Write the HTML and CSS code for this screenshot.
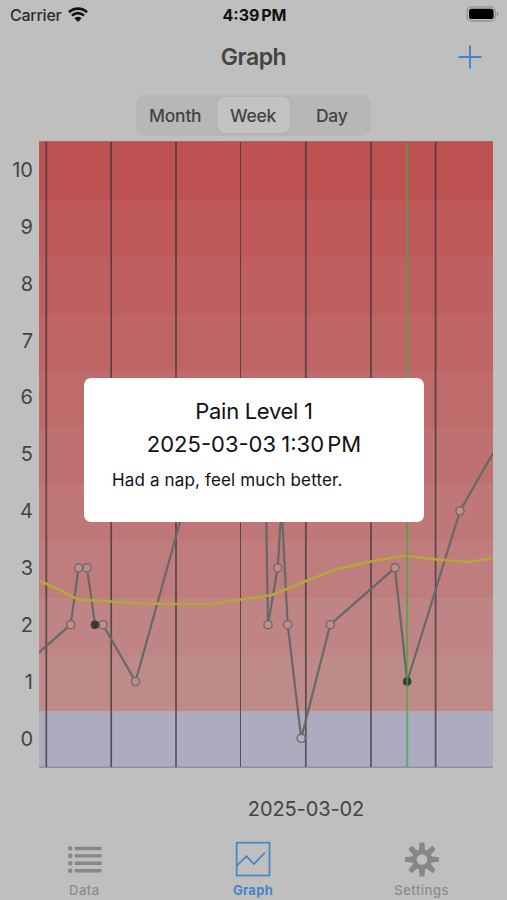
FILE: index.html
```
<!DOCTYPE html>
<html lang="en">
<head>
    <meta charset="UTF-8">
    <meta name="viewport" content="width=device-width, initial-scale=1.0">
    <title>Graph</title>
    <link rel="stylesheet" href="styles.css">
</head>
<body>
    <div class="status-bar">
        <div class="carrier">
            <span>Carrier</span>
            <svg width="20" height="16" viewBox="0 0 20 16">
                <path d="M1 5.3a12.9 12.9 0 0 1 18 0M4 8.6a8.6 8.6 0 0 1 12 0" fill="none" stroke="#111" stroke-width="2.7"/>
                <path d="M6.4 11.2a5.2 5.2 0 0 1 7.2 0L10 15z" fill="#111"/>
            </svg>
        </div>
        <div class="time">4:39 <span>PM</span></div>
        <div class="battery">
            <svg width="33" height="16" viewBox="0 0 33 16">
                <rect x="1" y="0.8" width="28.4" height="14.2" rx="4.6" fill="none" stroke="#929292" stroke-width="1.3"/>
                <rect x="3" y="2.8" width="24.6" height="10.2" rx="2.6" fill="#000"/>
                <path d="M31 5.6q2.4 2.4 0 4.8z" fill="#888"/>
            </svg>
        </div>
    </div>

    <div class="nav-bar">
        <h1>Graph</h1>
        <svg class="add" width="24" height="24" viewBox="0 0 24 24">
            <path d="M12 0.5v23M0.5 12h23" stroke="#4585c8" stroke-width="2"/>
        </svg>
    </div>

    <div class="segmented">
        <span>Month</span>
        <span class="selected">Week</span>
        <span>Day</span>
    </div>

    <div class="chart">
        <div class="y-axis">
            <span>10</span>
            <span>9</span>
            <span>8</span>
            <span>7</span>
            <span>6</span>
            <span>5</span>
            <span>4</span>
            <span>3</span>
            <span>2</span>
            <span>1</span>
            <span>0</span>
        </div>
        <svg class="plot" width="454" height="627" viewBox="39 141 454 627">
            <!-- Pain level bands -->
            <rect x="39" y="141" width="454" height="59" fill="#be5151"/>
            <rect x="39" y="200" width="454" height="57" fill="#bf5858"/>
            <rect x="39" y="257" width="454" height="57" fill="#bf5f5f"/>
            <rect x="39" y="314" width="454" height="57" fill="#bf6565"/>
            <rect x="39" y="371" width="454" height="56" fill="#bf6b6b"/>
            <rect x="39" y="427" width="454" height="57" fill="#bf7171"/>
            <rect x="39" y="484" width="454" height="57" fill="#bf7777"/>
            <rect x="39" y="541" width="454" height="57" fill="#bf7d7d"/>
            <rect x="39" y="598" width="454" height="57" fill="#bf8484"/>
            <rect x="39" y="655" width="454" height="56" fill="#bf8b89"/>
            <rect x="39" y="711" width="454" height="57" fill="#adabbf"/>
            <path d="M39 141.4H493" stroke="#a86a6a" stroke-width="1"/>
            <path d="M39 767.2H493" stroke="#929098" stroke-width="1.5"/>

            <!-- Days -->
            <path d="M46.3 142V767M111.2 142V767M176 142V767M305.8 142V767M371 142V767M435.6 142V767" stroke="#383438" stroke-opacity="0.75" stroke-width="1.7"/>
            <path d="M240.5 142V767" stroke="#383438" stroke-opacity="0.75" stroke-width="1"/>

            <polyline class="levels" points="39,652.5 70.7,624.7 78.6,567.8 87,567.8 95,624.7 103,624.7 135.5,681.5 182,515"/>
            <polyline class="levels" points="266,505 268,624.7 277.7,567.8 281.5,505 287.7,624.7 301.2,738.3 330.2,624.7 395,567.8 407.2,681.5 460,511 493,453"/>

            <g class="dots">
                <circle cx="70.7" cy="624.7" r="4.1"/>
                <circle cx="78.6" cy="567.8" r="4.1"/>
                <circle cx="87" cy="567.8" r="4.1"/>
                <circle cx="103" cy="624.7" r="4.1"/>
                <circle cx="135.5" cy="681.5" r="4.1"/>
                <circle cx="268" cy="624.7" r="4.1"/>
                <circle cx="277.7" cy="567.8" r="4.1"/>
                <circle cx="287.7" cy="624.7" r="4.1"/>
                <circle class="zero" cx="301.2" cy="738.3" r="4.1"/>
                <circle cx="330.2" cy="624.7" r="4.1"/>
                <circle cx="395" cy="567.8" r="4.1"/>
                <circle cx="460" cy="511" r="4.1"/>
                <circle class="noted" cx="95" cy="624.7" r="4"/>
                <circle class="noted" cx="407.2" cy="681.5" r="4"/>
            </g>

            <polyline class="average" points="39,580.5 59,589.5 78,599.5 111,601.5 140,603.5 176,604 210,604.2 240,599.5 272,595 305,581.5 335,569.5 371,561.5 404,555.5 436,559.5 468,562 493,558"/>
            <path d="M407.2 142V767" stroke="#3faa44" stroke-opacity="0.7" stroke-width="2"/>
        </svg>

        <div class="popup">
            <p class="level">Pain Level 1</p>
            <p class="when">2025-03-03 1:30 <span>PM</span></p>
            <p class="note">Had a nap, feel much better.</p>
        </div>
    </div>

    <div class="x-axis">2025-03-02</div>

    <div class="tab-bar">
        <div class="tab">
            <svg width="36" height="36" viewBox="0 0 36 36">
                <path d="M8.8 7.5H35.6M8.8 14.9H35.6M8.8 22.3H35.6M8.8 29.7H35.6" stroke="#878787" stroke-width="3.4"/>
                <g fill="#878787">
                    <circle cx="4.2" cy="7.5" r="2.3"/>
                    <circle cx="4.2" cy="14.9" r="2.3"/>
                    <circle cx="4.2" cy="22.3" r="2.3"/>
                    <circle cx="4.2" cy="29.7" r="2.3"/>
                </g>
            </svg>
            <span>Data</span>
        </div>
        <div class="tab active">
            <svg width="36" height="36" viewBox="0 0 36 36">
                <rect x="1.7" y="1.7" width="32.8" height="32.8" fill="none" stroke="#4585c8" stroke-width="1.7"/>
                <path d="M2 24.5L11.4 15.3L19 23L30 11.5" fill="none" stroke="#4585c8" stroke-width="1.7"/>
            </svg>
            <span>Graph</span>
        </div>
        <div class="tab">
            <svg width="36" height="36" viewBox="-18 -18.5 36 36">
                <circle r="7.7" fill="none" stroke="#878787" stroke-width="4.8"/>
                <g fill="#878787">
                    <path id="tooth" d="M-3.2 -8.5L-2.3 -17H2.3L3.2 -8.5z"/>
                    <use href="#tooth" transform="rotate(45)"/>
                    <use href="#tooth" transform="rotate(90)"/>
                    <use href="#tooth" transform="rotate(135)"/>
                    <use href="#tooth" transform="rotate(180)"/>
                    <use href="#tooth" transform="rotate(225)"/>
                    <use href="#tooth" transform="rotate(270)"/>
                    <use href="#tooth" transform="rotate(315)"/>
                </g>
            </svg>
            <span>Settings</span>
        </div>
    </div>
</body>
</html>
```
FILE: styles.css
```
body {
    margin: 0;
    width: 507px;
    height: 900px;
    overflow: hidden;
    display: flex;
    flex-direction: column;
    background-color: #bfbfbf;
    color: #444;
    font-family: Inter, "Liberation Sans", sans-serif;
}
p, h1 {
    margin: 0;
}

.status-bar {
    display: grid;
    grid-template-columns: 1fr auto 1fr;
    align-items: center;
    height: 29px;
    padding: 0 8px 0 10px;
    color: #111;
    font-size: 16px;
}
.carrier {
    display: flex;
    align-items: center;
    gap: 7px;
    color: #2c2c2c;
    font-weight: 500;
    letter-spacing: -0.25px;
}
.time {
    font-weight: 700;
    word-spacing: -2px;
}
.battery {
    display: flex;
    justify-content: flex-end;
    margin-top: -1px;
}

.nav-bar {
    display: grid;
    grid-template-columns: 1fr auto 1fr;
    align-items: center;
    height: 56px;
    margin-bottom: 1px;
    padding: 0 25px;
}
.nav-bar h1 {
    grid-column: 2;
    font-size: 23px;
    font-weight: 600;
    letter-spacing: -0.5px;
}
.add {
    justify-self: end;
}

.segmented {
    display: flex;
    align-self: center;
    box-sizing: border-box;
    width: 235px;
    height: 42px;
    margin: 8px 0 5px;
    padding: 3px;
    border-radius: 10px;
    background-color: #b7b7b7;
    font-size: 17.5px;
    font-weight: 500;
    letter-spacing: -0.25px;
}
.segmented span {
    flex: 1;
    display: flex;
    align-items: center;
    justify-content: center;
}
.segmented span:first-child {
    padding-right: 4px;
}
.segmented span:last-child {
    padding-left: 5px;
}
.segmented .selected {
    flex: 0 0 73px;
    margin: 0 1px;
    border-radius: 8px;
    background-color: #c2c2c2;
    box-shadow: 0 1px 4px rgba(0, 0, 0, 0.06);
}

.chart {
    position: relative;
    display: flex;
    height: 627px;
}
.y-axis {
    box-sizing: border-box;
    width: 39px;
    padding: 1px 6px 0 0;
    display: flex;
    flex-direction: column;
    text-align: right;
    font-size: 20px;
}
.y-axis span {
    height: 56.87px;
    line-height: 57.6px;
}
.plot {
    display: block;
}
.average, .levels {
    fill: none;
    stroke-linejoin: round;
}
.average {
    stroke: #b4a637;
    stroke-width: 2.6;
}
.levels {
    stroke: #686868;
    stroke-width: 2.2;
}
.dots circle {
    fill: #c08c8c;
    stroke: #706969;
    stroke-width: 1.4;
}
.dots .zero {
    fill: #b4b2c0;
}
.dots .noted {
    fill: #383838;
    stroke: #444;
    stroke-width: 1;
}

.popup {
    position: absolute;
    left: 84px;
    top: 237px;
    box-sizing: border-box;
    width: 340px;
    height: 144px;
    padding: 17px 28px;
    border-radius: 7px;
    background-color: #fff;
    color: #111;
    text-align: center;
}
.level, .when {
    font-size: 22px;
    line-height: 33px;
    white-space: nowrap;
}
.level {
    letter-spacing: -0.3px;
}
.when {
    word-spacing: -1px;
}
.when span {
    margin-left: -2px;
}
.note {
    margin-top: 6px;
    font-size: 17px;
    line-height: 26px;
    letter-spacing: 0.15px;
    text-align: left;
}

.x-axis {
    height: 72px;
    padding-left: 105px;
    line-height: 82px;
    text-align: center;
    font-size: 20px;
    letter-spacing: -0.1px;
}

.tab-bar {
    display: flex;
    flex: 1;
    padding-right: 1px;
}
.tab {
    flex: 1;
    display: flex;
    flex-direction: column;
    align-items: center;
    padding-top: 1px;
    color: #8c8c8c;
    font-size: 13px;
    font-weight: 500;
    letter-spacing: 0.5px;
}
.tab span {
    margin-top: 5px;
}
.tab.active {
    color: #4585c8;
    font-weight: 700;
    letter-spacing: 0.3px;
}
```
